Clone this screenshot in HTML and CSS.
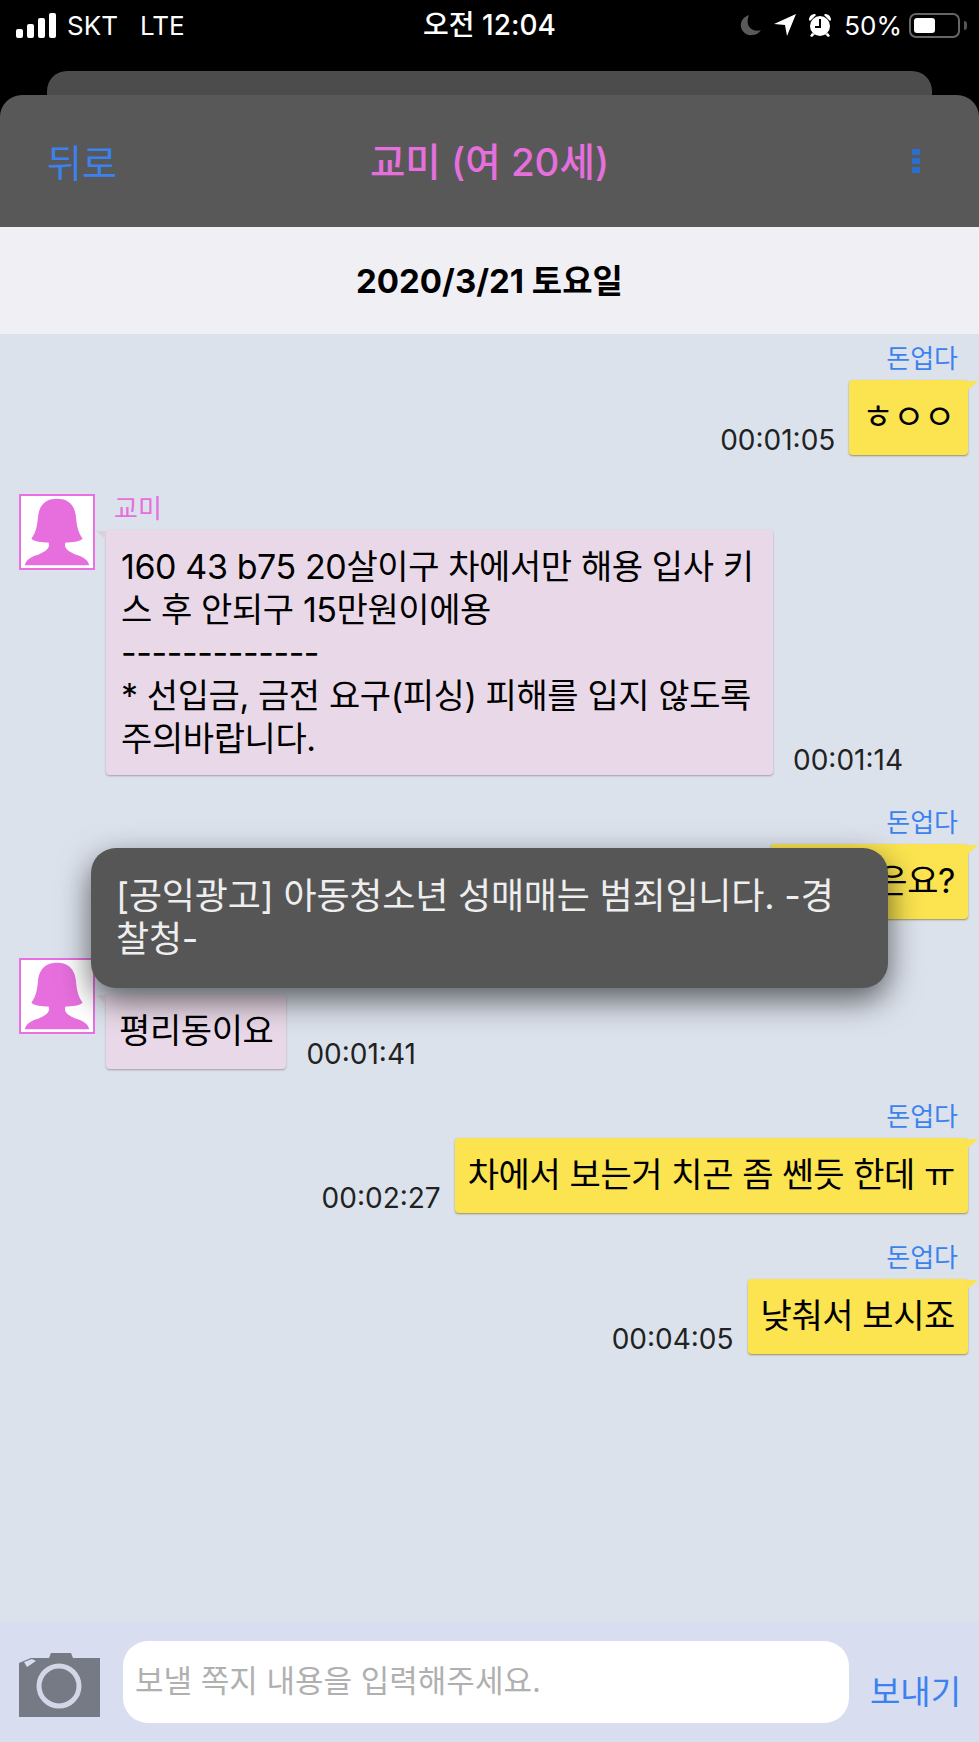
FILE: index.html
```html
<!DOCTYPE html>
<html lang="ko">
<head>
    <meta charset="UTF-8">
    <meta name="viewport" content="width=device-width, initial-scale=1.0">
    <title>쪽지</title>
    <link rel="stylesheet" href="styles.css">
</head>
<body>

    <div class="page">
        <!-- status bar -->
        <div class="status">
            <div class="status-left">
                <div class="signal"><i class="b1"></i><i class="b2"></i><i class="b3"></i><i class="b4"></i></div>
                <span>SKT</span>
                <span class="lte">LTE</span>
            </div>
            <div class="status-time">오전 12:04</div>
            <div class="status-right">
                <svg class="ico" width="22" height="22" viewBox="0 0 22 22"><path fill="#5a5a5a" d="M9 1 C3 3 0 8 1 13 C2 18 7 22 12 21 C16 21 19 19 21 16 C15 18 9 15 8 10 C7 7 8 4 9 1Z"/></svg>
                <svg class="ico" width="22" height="22" viewBox="0 0 22 22"><path fill="#fff" d="M22 0 L0 10 L11 11 L13 22Z"/></svg>
                <svg class="ico" width="24" height="24" viewBox="0 0 24 24">
                    <path fill="#fff" d="M1 7 C1 3 4 1 7 1 L8 2 L2 8Z M23 7 C23 3 20 1 17 1 L16 2 L22 8Z M4 20 L2 23 L4 24 L7 21Z M20 20 L22 23 L20 24 L17 21Z"/>
                    <circle cx="12" cy="13" r="10" fill="#fff"/>
                    <path fill="none" stroke="#000" stroke-width="2" d="M12 6 V14 H7"/>
                </svg>
                <span class="pct">50%</span>
                <div class="battery"><div class="battery-fill"></div></div>
                <div class="battery-nub"></div>
            </div>
        </div>

        <div class="card-behind"></div>

        <!-- header -->
        <div class="header">
            <span class="back">뒤로</span>
            <span class="title">교미 (여 20세)</span>
            <div class="dots"><i></i><i></i><i></i></div>
        </div>

        <div class="datebar">2020/3/21 토요일</div>

        <div class="chat">
            <div class="msg mine">
                <div class="name">돈업다</div>
                <div class="line">
                    <span class="time">00:01:05</span>
                    <div class="bubble">ㅎㅇㅇ</div>
                </div>
            </div>

            <div class="msg theirs">
                <svg class="avatar" viewBox="0 0 76 76"><path fill="#e66fdd" d="M38 3 C52 3 57 12 58 22 C59 32 60 38 65 45 C62 48 54 49 47 49 C45 54 48 58 58 62 C66 64 71 68 72 73 L4 73 C5 68 10 64 18 62 C28 58 31 54 29 49 C22 49 14 48 11 45 C16 38 17 32 18 22 C19 12 24 3 38 3Z"/></svg>
                <div class="body">
                    <div class="name">교미</div>
                    <div class="line">
                        <div class="bubble wide">160 43 b75 20살이구 차에서만 해용 입사 키<br>스 후 안되구 15만원이에용<br>-------------<br>* 선입금, 금전 요구(피싱) 피해를 입지 않도록<br>주의바랍니다.</div>
                        <span class="time">00:01:14</span>
                    </div>
                </div>
            </div>

            <div class="msg mine">
                <div class="name">돈업다</div>
                <div class="line">
                    <div class="bubble covered">은요?</div>
                </div>
            </div>

            <div class="msg theirs">
                <svg class="avatar" viewBox="0 0 76 76"><path fill="#e66fdd" d="M38 3 C52 3 57 12 58 22 C59 32 60 38 65 45 C62 48 54 49 47 49 C45 54 48 58 58 62 C66 64 71 68 72 73 L4 73 C5 68 10 64 18 62 C28 58 31 54 29 49 C22 49 14 48 11 45 C16 38 17 32 18 22 C19 12 24 3 38 3Z"/></svg>
                <div class="body">
                    <div class="name"></div>
                    <div class="line">
                        <div class="bubble">평리동이요</div>
                        <span class="time">00:01:41</span>
                    </div>
                </div>
            </div>

            <div class="msg mine">
                <div class="name">돈업다</div>
                <div class="line">
                    <span class="time">00:02:27</span>
                    <div class="bubble">차에서 보는거 치곤 좀 쎈듯 한데 ㅠ</div>
                </div>
            </div>

            <div class="msg mine">
                <div class="name">돈업다</div>
                <div class="line">
                    <span class="time">00:04:05</span>
                    <div class="bubble">낮춰서 보시죠</div>
                </div>
            </div>
        </div>

        <!-- input bar -->
        <div class="inputbar">
            <svg class="camera" width="82" height="64" viewBox="0 0 82 64">
                <path fill="#767a85" d="M0 10 L12 5 L30 5 L32 0 L52 0 L54 5 L81 5 L81 64 L0 64Z"/>
                <path fill="#d8ddf0" d="M5 9 L13 6 L17 8 L8 14Z"/>
                <circle cx="40" cy="33" r="20" fill="none" stroke="#d3d6e6" stroke-width="5"/>
            </svg>
            <div class="field">보낼 쪽지 내용을 입력해주세요.</div>
            <span class="send">보내기</span>
        </div>

        <div class="notice">[공익광고] 아동청소년 성매매는 범죄입니다. -경<br>찰청-</div>
    </div>

</body>
</html>
```

FILE: styles.css
```css
* { box-sizing: border-box; }
body { margin: 0; background: #000; font-family: Inter, "Noto Sans CJK KR", sans-serif; }
.page { position: relative; width: 979px; height: 1742px; display: flex; flex-direction: column; overflow: hidden; }

/* status bar */
.status { height: 50px; padding: 0 12px 0 16px; display: grid; grid-template-columns: 1fr auto 1fr; align-items: center; color: #fff; font-size: 26px; }
.status-left { display: flex; align-items: center; gap: 10px; }
.lte { margin-left: 12px; }
.signal { display: flex; align-items: flex-end; gap: 4px; height: 25px; margin-right: 1px; }
.signal i { display: block; width: 7px; background: #fff; border-radius: 2px; }
.b1 { height: 9px; }
.b2 { height: 14px; }
.b3 { height: 20px; }
.b4 { height: 25px; }
.status-time { font-size: 28px; font-weight: 500; margin: -5px 4px 0 0; }
.status-right { display: flex; align-items: center; justify-content: flex-end; gap: 12px; }
.pct { font-size: 26px; margin-right: -5px; }
.battery { width: 51px; height: 25px; border: 2px solid #666; border-radius: 7px; padding: 3px; }
.battery-fill { width: 21px; height: 100%; background: #fff; border-radius: 3px; }
.battery-nub { width: 3px; height: 9px; background: #555; margin-left: -8px; border-radius: 0 3px 3px 0; }

.card-behind { height: 24px; margin: 21px 47px 0 47px; background: #4c4c4c; border-radius: 20px 20px 0 0; }

.header { height: 132px; background: #585858; border-radius: 22px 22px 0 0; padding: 0 47px; display: grid; grid-template-columns: 1fr auto 1fr; align-items: center; }
.back { font-size: 38px; color: #3b82f0; margin-top: -2px; }
.title { font-size: 38.5px; font-weight: 500; color: #e56fdc; margin-top: -5px; }
.dots { justify-self: end; display: flex; flex-direction: column; gap: 3px; margin-right: 12px; }
.dots i { display: block; width: 8px; height: 6px; background: #2a6fd0; border-radius: 1px; }

.datebar { height: 107px; padding-bottom: 4px; background: #efeff4; display: flex; align-items: center; justify-content: center; font-size: 33px; font-weight: 700; color: #000; }

/* chat */
.chat { flex: 1; background: #dce2ec; padding: 10px 11px 0 19px; display: flex; flex-direction: column; }
.msg { margin-top: 33px; }
.msg:first-child { margin-top: 0; }
.msg.mine + .msg.theirs { margin-top: 39px; }
.msg.mine + .msg.mine { margin-top: 30px; }
.theirs { display: flex; gap: 11px; }
.avatar { width: 76px; height: 76px; background: #fff; border: 2px solid #e870e0; flex: none; }
.name { height: 30px; line-height: 30px; font-size: 26px; margin-bottom: 6px; }
.mine .name { text-align: right; color: #3b82f0; padding-right: 10px; }
.theirs .name { color: #e56fdc; margin-left: 8px; }
.line { display: flex; align-items: flex-end; gap: 14px; }
.mine .line { justify-content: flex-end; }
.theirs .line { gap: 20px; }
.time { font-size: 28px; line-height: 30px; color: #222; }

.bubble { position: relative; min-height: 75px; padding: 15px 13px; font-size: 34px; letter-spacing: -0.4px; line-height: 44px; color: #000; border-radius: 4px; white-space: nowrap; }
.mine .bubble { background: #fbe44f; box-shadow: 0 1px 2px rgba(120, 110, 40, .7); }
.theirs .bubble { background: #e9d9e8; box-shadow: 0 1px 2px rgba(120, 110, 130, .6); }
.wide { width: 667px; padding: 15px 0 15px 15px; line-height: 43px; }
.covered { width: 197px; text-align: right; }

/* bubble tails */
.mine .bubble::after { content: ""; position: absolute; top: 1px; right: -10px; border-top: 9px solid #fbe44f; border-right: 10px solid transparent; border-left: 0; }
.theirs .bubble::before { content: ""; position: absolute; top: 1px; left: -10px; border-top: 9px solid #d9d2de; border-left: 10px solid transparent; }

/* input bar */
.inputbar { height: 120px; background: #d8ddf0; padding: 19px 16px 19px 19px; display: flex; align-items: flex-start; }
.camera { margin-top: 12px; flex: none; }
.field { width: 726px; height: 82px; margin-left: 22px; background: #fff; border-radius: 25px; padding: 0 0 8px 12px; display: flex; align-items: center; font-size: 31px; color: #b0b0b0; }
.send { margin: 29px 0 0 21px; font-size: 33px; line-height: 44px; color: #3b82f0; }

/* notice over the chat */
.notice { position: absolute; left: 91px; top: 848px; width: 797px; height: 140px; padding: 27px 25px; background: #565656; border-radius: 25px; box-shadow: 0 12px 32px rgba(0, 0, 0, .6); font-size: 36px; letter-spacing: -0.2px; line-height: 43px; color: #eee; white-space: nowrap; }
```
